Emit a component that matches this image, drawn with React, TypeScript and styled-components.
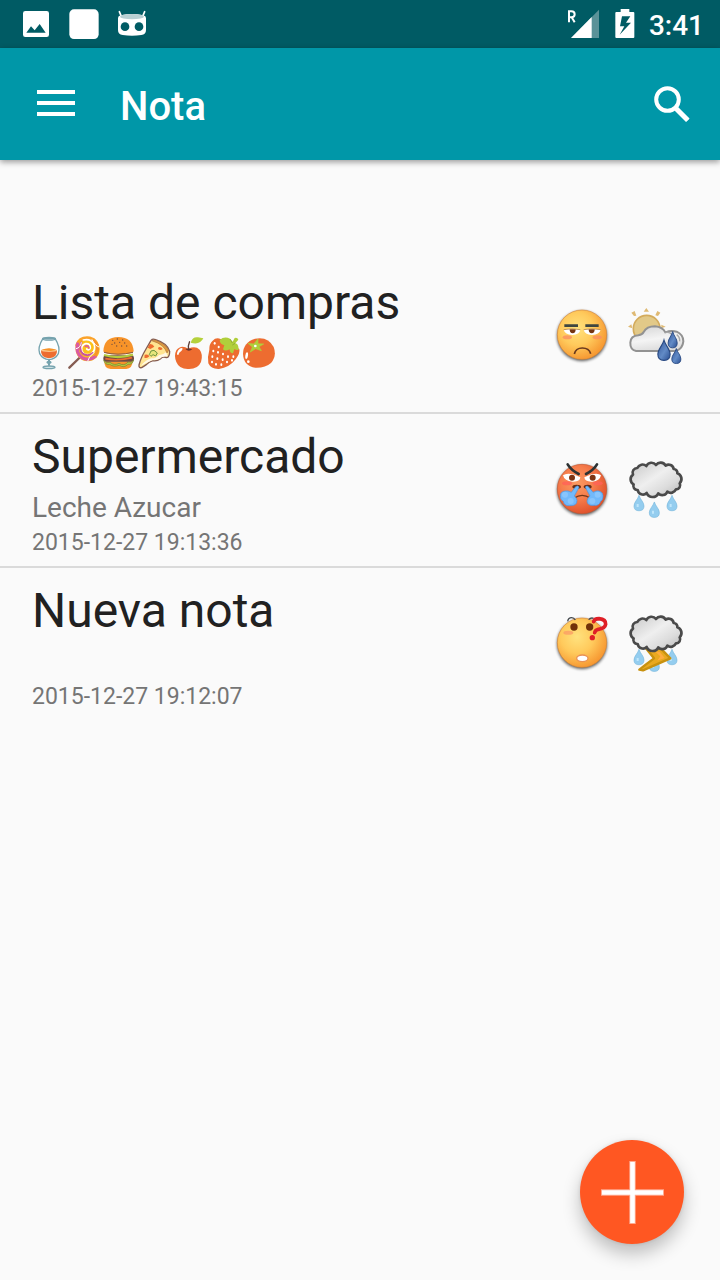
import React from "react";
import styled, { createGlobalStyle } from "styled-components";

const GlobalStyle = createGlobalStyle`
  *, *::before, *::after { box-sizing: border-box; }
  html, body, #root { height: 100%; }
  body {
    margin: 0;
    background: #fafafa;
    font-family: Roboto, "Noto Sans", sans-serif;
  }
`;

const Screen = styled.div`
  min-height: 100%;
  background: #fafafa;
`;

const StatusBar = styled.div`
  display: flex;
  align-items: center;
  justify-content: space-between;
  height: 48px;
  padding: 0 16px 0 20px;
  background: #005b64;
  color: #fff;
`;

const StatusGroup = styled.div<{ $gap: number }>`
  display: flex;
  align-items: center;
  gap: ${(p) => p.$gap}px;
`;

const Clock = styled.time`
  font-size: 28px;
  font-weight: 500;
  line-height: 48px;
  padding-top: 4px;
`;

const AppBar = styled.header`
  display: flex;
  align-items: center;
  height: 112px;
  padding: 0 16px;
  background: #0097a8;
  color: #fff;
  box-shadow: 0 2px 6px rgba(0, 0, 0, 0.4);
`;

const IconButton = styled.button`
  display: flex;
  align-items: center;
  justify-content: center;
  width: 80px;
  height: 80px;
  padding: 0 0 2px;
  border: 0;
  background: none;
  color: inherit;
  cursor: pointer;
`;

const SearchButton = styled(IconButton)`
  width: 64px;
  padding: 0;
`;

const AppTitle = styled.h1`
  flex: 1;
  margin: 0;
  padding: 6px 0 0 24px;
  font-size: 40px;
  font-weight: 500;
  line-height: 48px;
`;

const NoteList = styled.ul`
  margin: 0;
  padding: 100px 0 0;
  list-style: none;
`;

const NoteRow = styled.li`
  display: flex;
  align-items: center;
  justify-content: space-between;
  padding: 0 36px 0 32px;

  & + & {
    border-top: 2px solid #dadada;
  }
`;

const NoteText = styled.div`
  padding: 14px 0 8px;
`;

const NoteTitle = styled.h2`
  margin: 0;
  color: #212121;
  font-size: 48px;
  font-weight: 400;
  line-height: 58px;
`;

const NoteBody = styled.p`
  display: flex;
  margin: 0;
  height: 42px;
  color: #757575;
  font-size: 28px;
  line-height: 44px;
`;

const NoteDate = styled.time`
  display: block;
  color: #757575;
  font-size: 23px;
  line-height: 30px;
`;

const NoteIcons = styled.div`
  display: flex;
  gap: 18px;
`;

const Picture = styled.svg`
  display: block;
  flex: none;
  width: 56px;
  height: 56px;
  overflow: visible;
`;

const FoodIcon = styled.svg`
  display: block;
  flex: none;
  align-self: center;
  width: 35px;
  height: 36px;
  overflow: visible;
`;

const AddButton = styled.button`
  position: fixed;
  right: 36px;
  bottom: 36px;
  display: flex;
  align-items: center;
  justify-content: center;
  width: 104px;
  height: 104px;
  padding: 0;
  border: 0;
  border-radius: 50%;
  background: #ff5722;
  box-shadow: 0 10px 18px rgba(0, 0, 0, 0.24), 0 0 4px rgba(0, 0, 0, 0.1);
  cursor: pointer;
`;

/* ---------- status bar icons ---------- */

const ImageIcon = () => (
  <svg width="32" height="32" viewBox="0 0 96 96" aria-hidden="true">
    <path
      fillRule="evenodd"
      fill="#fff"
      d="M16 9h64q7 0 7 7v64q0 7-7 7H16q-7 0-7-7V16q0-7 7-7zM19 74h58L59 48 44 67 33 55z"
    />
  </svg>
);

const SquareIcon = () => (
  <svg width="32" height="32" viewBox="0 0 96 96" aria-hidden="true">
    <rect x="4" y="4" width="88" height="89" rx="14" fill="#fff" />
  </svg>
);

const RobotIcon = () => (
  <svg width="32" height="32" viewBox="0 0 96 96" aria-hidden="true">
    <path d="M10 11l6 14M86 11l-6 14" stroke="#fff" strokeWidth="5" strokeLinecap="round" />
    <path
      fill="#fff"
      d="M6 30Q6 24 14 22Q48 14 82 22Q90 24 90 30V66Q90 80 76 81Q48 85 20 81Q6 80 6 66z"
    />
    <ellipse cx="48" cy="26" rx="36" ry="8" fill="#b9d0d4" />
    <circle cx="27" cy="56" r="13" fill="#005b64" />
    <circle cx="69" cy="56" r="13" fill="#005b64" />
  </svg>
);

const SignalIcon = () => (
  <svg width="34" height="32" viewBox="0 0 102 96" role="img" aria-label="Roaming">
    <path d="M96 5v85H12z" fill="#5a9298" />
    <path d="M74 27v63H12z" fill="#fff" />
    <path
      d="M6 43V10h7q10 0 10 9t-10 9H6M14 28l9 15"
      fill="none"
      stroke="#fff"
      strokeWidth="6"
    />
  </svg>
);

const BatteryIcon = () => (
  <svg width="20" height="32" viewBox="0 0 60 96" role="img" aria-label="Charging">
    <path
      fillRule="evenodd"
      fill="#fff"
      d="M17 3h26v9h12q3 0 3 3v72q0 3-3 3H4q-3 0-3-3V15q0-3 3-3h13zM21 25L15 55H28L14 80 48 44H33L46 25z"
    />
  </svg>
);

const MenuIcon = () => (
  <svg width="38" height="26" viewBox="0 0 38 26" aria-hidden="true">
    <path d="M0 2h38M0 13h38M0 24h38" stroke="#fff" strokeWidth="4" />
  </svg>
);

const SearchIcon = () => (
  <svg width="36" height="36" viewBox="0 0 36 36" aria-hidden="true">
    <circle cx="13.5" cy="13.5" r="11.3" fill="none" stroke="#fff" strokeWidth="4" />
    <path d="M21 21l3 1 11 11-3 3-11-11z" fill="#fff" />
    <path d="M22.5 22.5l11.5 11.5" stroke="#fff" strokeWidth="4.4" />
  </svg>
);

const PlusIcon = () => (
  <svg width="64" height="64" viewBox="0 0 64 64" aria-hidden="true">
    <path d="M32.5 1v63M1 32.5h63" stroke="#ffab91" strokeWidth="6.4" />
    <path d="M32.5 2v61M2 32.5h61" stroke="#fff" strokeWidth="4.6" />
  </svg>
);

/* ---------- food emoji ---------- */

const Wine = () => (
  <FoodIcon viewBox="36 195 105 108" role="img" aria-label="wine">
    <g stroke="#76a3ae" strokeWidth="4" fill="none">
      <path d="M69 205Q52 232 59 251Q68 268 87 269Q106 268 115 251Q122 232 105 205z" fill="#fcffff" />
      <ellipse cx="87" cy="206" rx="19" ry="4" />
      <path d="M87 269v18" strokeWidth="6" />
      <ellipse cx="87" cy="277" rx="6" ry="3" fill="#76a3ae" />
      <ellipse cx="87" cy="292" rx="18" ry="4" fill="#cde0e4" />
    </g>
    <path d="M63 240H111Q113 263 87 265Q61 263 63 240z" fill="#ed6c30" />
    <ellipse cx="87" cy="241" rx="24" ry="5" fill="#fcc58a" />
    <path d="M65 239Q87 230 109 239L92 243z" fill="#f79329" />
  </FoodIcon>
);

const Lollipop = () => (
  <FoodIcon viewBox="141 195 105 108" role="img" aria-label="lollipop">
    <path d="M148 293L184 258" stroke="#855c52" strokeWidth="7" strokeLinecap="round" />
    <circle cx="203" cy="238" r="36" fill="#fcc21b" />
    <g fill="none" strokeLinecap="round">
      <path d="M171 226Q180 201 209 205Q234 212 232 239" stroke="#fba32b" strokeWidth="11" />
      <path d="M173 222Q166 249 186 263Q207 274 226 259" stroke="#db5aa0" strokeWidth="10" />
      <path d="M222 214Q240 232 227 255" stroke="#f79329" strokeWidth="9" />
      <path d="M190 210Q212 205 222 222Q229 241 213 252Q194 259 186 243Q181 226 197 221Q212 220 211 234Q208 243 200 237" stroke="#fff" strokeWidth="5" />
      <path d="M184 218Q175 238 188 251Q204 261 218 249" stroke="#c9569b" strokeWidth="6" />
      <path d="M196 229Q204 225 207 234" stroke="#db5aa0" strokeWidth="5" />
      <path d="M169 236Q182 233 184 218M203 273Q205 260 223 247M237 231Q226 229 216 209" stroke="#fff" strokeWidth="3" />
    </g>
  </FoodIcon>
);

const Burger = () => (
  <FoodIcon viewBox="246 195 105 108" role="img" aria-label="hamburger">
    <path d="M253 274Q252 296 272 297H319Q337 296 338 274z" fill="#f79329" />
    <rect x="250" y="256" width="92" height="19" rx="9" fill="#70493f" />
    <path d="M251 271Q260 282 270 277Q283 288 297 280Q313 290 324 276Q335 280 341 270Q337 285 324 283Q312 295 298 286Q280 292 269 283Q256 286 251 271z" fill="#b5cb3e" stroke="#718535" strokeWidth="2" />
    <path d="M256 266Q295 274 336 263" stroke="#ed6c30" strokeWidth="5" fill="none" />
    <path d="M252 255Q294 268 339 254" stroke="#b5cb3e" strokeWidth="7" fill="none" />
    <path d="M250 244Q252 201 295 201Q338 201 341 244Q337 254 295 254Q254 254 250 244z" fill="#f79329" />
    <path d="M252 247Q293 258 339 247" stroke="#8a5a43" strokeWidth="3" fill="none" />
    {[[278, 211], [292, 207], [308, 210], [284, 219], [299, 217], [314, 219], [276, 223], [305, 228], [290, 228], [320, 228]].map(
      ([x, y]) => (
        <circle key={`${x}-${y}`} cx={x} cy={y} r="2" fill="#6d4c41" />
      )
    )}
  </FoodIcon>
);

const Pizza = () => (
  <FoodIcon viewBox="351 195 105 108" role="img" aria-label="pizza">
    <path
      d="M393 211Q398 205 407 209Q442 220 449 244Q449 262 440 263Q428 258 422 266Q410 275 399 272Q386 276 379 284Q370 290 365 293Q356 295 357 285Q362 264 378 237z"
      fill="#ffe491"
      stroke="#855c52"
      strokeWidth="4"
      strokeLinejoin="round"
    />
    <path d="M395 212Q433 223 441 249L446 241Q438 222 405 210z" fill="#e09a3e" stroke="#a8703f" strokeWidth="2" />
    <path d="M438 247Q428 256 417 255Q407 266 394 265Q377 270 362 288Q379 279 397 271Q418 270 425 262Q436 259 443 259z" fill="#fff8e8" />
    <path d="M389 222q10-1 14 8l-12 7-8-4zM416 231q9-1 12 6-7 6-14 0zM374 254q11-3 14 5-6 8-15 4z" fill="#ed6c30" />
    <path d="M388 254l5-11 9-2 10 8-5 9-8-4-6 5z" fill="#e6e67a" stroke="#6c9440" strokeWidth="3" />
  </FoodIcon>
);

const Apple = () => (
  <FoodIcon viewBox="456 195 105 108" role="img" aria-label="apple">
    <path d="M505 236Q483 222 469 241Q461 257 469 276Q478 298 505 297Q534 298 543 276Q550 253 539 239Q526 226 505 236z" fill="#ed6c30" />
    <path d="M496 237Q506 233 517 238Q506 247 496 237z" fill="#70342d" />
    <path d="M506 240Q503 228 509 214" stroke="#5b3c35" strokeWidth="4" fill="none" />
    <path d="M512 218Q518 199 534 202L550 205Q540 226 512 218z" fill="#b5d13b" />
    <path d="M471 250Q474 236 485 234Q491 235 484 243Q476 248 475 255Q470 256 471 250z" fill="#fff" />
  </FoodIcon>
);

const Strawberry = () => (
  <FoodIcon viewBox="561 195 105 108" role="img" aria-label="strawberry">
    <path d="M578 212Q567 222 568 239Q562 259 565 280Q573 298 597 297Q628 293 647 268Q661 249 658 237L602 207Q588 201 578 212z" fill="#ed6c30" />
    <path d="M599 210Q613 198 630 206L638 215L644 204Q653 202 655 209L646 220Q655 220 656 239Q650 242 643 237L639 250Q629 250 629 238Q615 245 609 238L613 226Q600 223 599 210z" fill="#b0cf3b" />
    <path d="M630 207l7 12M645 220l-8 5" stroke="#7f9c35" strokeWidth="2" fill="none" />
    {[[584, 220], [596, 231], [580, 243], [594, 247], [609, 252], [577, 260], [592, 266], [608, 269], [624, 260], [640, 260], [576, 276], [588, 283], [604, 284], [621, 276], [636, 271]].map(
      ([x, y]) => (
        <ellipse key={`${x}-${y}`} cx={x} cy={y} rx="3" ry="4" fill="#fff" />
      )
    )}
  </FoodIcon>
);

const Tomato = () => (
  <FoodIcon viewBox="666 195 105 108" role="img" aria-label="tomato">
    <path d="M669 252Q669 217 705 206Q744 198 761 231Q771 258 753 279Q736 294 706 293Q671 289 669 252z" fill="#ed6c30" />
    <path d="M684 220L701 222L714 207L714 221L731 222L717 230L724 242L707 236L691 246L697 231z" fill="#b0cf3b" stroke="#b0cf3b" strokeWidth="2" />
    <circle cx="706" cy="228" r="4" fill="#fff" />
    <ellipse cx="680" cy="257" rx="4" ry="10" fill="#fff" transform="rotate(8 680 257)" />
    <circle cx="685" cy="275" r="4" fill="#fff" />
  </FoodIcon>
);

/* ---------- mood faces ---------- */

const FaceDefs = ({ id, angry = false }: { id: string; angry?: boolean }) => (
  <defs>
    <radialGradient id={id} cx="0.4" cy="0.38" r="0.66">
      <stop offset="0" stopColor={angry ? "#fb9b62" : "#ffe27e"} />
      <stop offset="0.5" stopColor={angry ? "#f67d4c" : "#ffca5c"} />
      <stop offset="1" stopColor={angry ? "#df4f2a" : "#f6942e"} />
    </radialGradient>
    <filter id={`${id}-soft`} x="-20%" y="-20%" width="140%" height="140%">
      <feGaussianBlur stdDeviation="4" />
    </filter>
  </defs>
);

const FaceBase = ({ id, angry }: { id: string; angry?: boolean }) => (
  <>
    <FaceDefs id={id} angry={angry} />
    <circle cx="111" cy="121" r="75" fill="#000" opacity="0.65" filter={`url(#${id}-soft)`} />
    <circle cx="111" cy="117" r="74" fill={`url(#${id})`} stroke={angry ? "#c65a35" : "#d98a38"} strokeWidth="2" />
  </>
);

const AnnoyedFace = () => (
  <Picture viewBox="27 37 168 168" role="img" aria-label="annoyed">
    <FaceBase id="annoyed" />
    <ellipse cx="67" cy="125" rx="14" ry="6" fill="#fa8f60" opacity="0.8" />
    <ellipse cx="157" cy="125" rx="14" ry="6" fill="#fa8f60" opacity="0.8" />
    <path d="M56 102Q80 96 106 102Q104 117 82 118Q60 117 56 102zM116 102Q141 96 167 102Q163 117 141 118Q119 117 116 102z" fill="#fff" />
    <path d="M74 101h18q0 12-9 12t-9-12zM131 101h18q0 12-9 12t-9-12z" fill="#753511" />
    <path d="M56 102Q80 97 106 102M116 102Q141 97 167 102" stroke="#a56c31" strokeWidth="2" fill="none" />
    <path d="M58 90h41M121 90h40" stroke="#3f4640" strokeWidth="8" />
    <path d="M88 175Q92 157 112 157Q132 157 137 174" stroke="#69391d" strokeWidth="5" fill="none" />
  </Picture>
);

const AngryFace = () => (
  <Picture viewBox="27 36 168 168" role="img" aria-label="angry">
    <FaceBase id="angry" angry />
    <ellipse cx="66" cy="100" rx="15" ry="6" fill="#ff6257" opacity="0.8" />
    <ellipse cx="158" cy="100" rx="15" ry="6" fill="#ff6257" opacity="0.8" />
    <path d="M54 76Q64 68 84 73L106 82Q105 96 83 95Q58 94 54 76zM168 76Q160 68 140 73L118 82Q119 96 142 95Q164 94 168 76z" fill="#fff" />
    <circle cx="81" cy="83" r="9" fill="#7d3413" />
    <circle cx="143" cy="83" r="9" fill="#7d3413" />
    <path d="M68 43Q78 60 101 72M156 43Q146 60 123 72" stroke="#2d3233" strokeWidth="8" fill="none" strokeLinecap="round" />
    <path d="M88 144Q111 128 136 144" stroke="#743719" strokeWidth="4" fill="none" />
    <ellipse cx="95" cy="110" rx="13" ry="6" fill="#692c13" />
    <ellipse cx="128" cy="110" rx="12" ry="6" fill="#692c13" />
    <g fill="#72b9fb" stroke="#4a96e2" strokeWidth="2">
      <path d="M92 110L79 127Q69 121 60 123Q46 125 46 137Q45 149 55 154Q58 169 74 167Q96 169 96 151Q95 144 88 138L102 112Q99 105 92 110z" />
      <path d="M130 110L144 127Q153 121 162 123Q174 126 174 137Q175 149 167 154Q162 168 149 166Q127 169 126 153Q127 144 135 138L121 112Q124 105 130 110z" />
    </g>
    <g fill="#97cdff" opacity="0.6">
      <circle cx="60" cy="134" r="9" />
      <circle cx="77" cy="153" r="9" />
      <circle cx="158" cy="134" r="9" />
      <circle cx="142" cy="153" r="9" />
    </g>
  </Picture>
);

const ConfusedFace = () => (
  <Picture viewBox="27 37 168 168" role="img" aria-label="confused">
    <FaceBase id="confused" />
    <path d="M68 53Q70 42 80 42Q87 42 91 49M131 48Q137 41 146 44" stroke="#42474b" strokeWidth="4" fill="none" />
    <ellipse cx="70" cy="87" rx="15" ry="6" fill="#fb9765" opacity="0.7" />
    <circle cx="87" cy="70" r="11" fill="#713109" />
    <circle cx="134" cy="70" r="11" fill="#713109" />
    <ellipse cx="112" cy="164" rx="17" ry="10" fill="#fff" stroke="#e99155" strokeWidth="4" />
    <path d="M146 54Q148 45 162 45Q183 47 182 62Q180 75 160 77Q151 79 149 87" stroke="#df1f27" strokeWidth="11" fill="none" strokeLinecap="round" />
    <circle cx="142" cy="102" r="8" fill="#df1f27" />
  </Picture>
);

/* ---------- weather ---------- */

const DROP = "M0-26C4-12 16-4 16 9Q16 24 0 24T-16 9C-16-4-4-12 0-26z";

const SunCloudRain = () => (
  <Picture viewBox="249 39 168 168" role="img" aria-label="sun, cloud and rain">
    <defs>
      <linearGradient id="cloud" x1="0" y1="0" x2="0.3" y2="1">
        <stop offset="0" stopColor="#d4d4d4" />
        <stop offset="0.6" stopColor="#f4f4f4" />
        <stop offset="1" stopColor="#dedede" />
      </linearGradient>
      <linearGradient id="rain" x1="0" y1="0" x2="1" y2="1">
        <stop offset="0" stopColor="#325498" />
        <stop offset="0.55" stopColor="#628bc6" />
        <stop offset="1" stopColor="#2a4e91" />
      </linearGradient>
    </defs>
    <circle cx="305" cy="101" r="40" fill="#e2c988" stroke="#d3ab5c" strokeWidth="5" />
    <g fill="#dfba74">
      <path d="M296 50l8-11 8 11zM259 53l10-5 5 14-7 1zM337 48l9 5-7 10-8-2zM249 95l10-7 3 12zM349 89l13 6-13 5z" />
    </g>
    <path
      d="M273 168Q255 164 256 143Q257 122 280 121Q292 119 296 111Q305 94 330 94Q353 96 361 112Q378 105 395 110Q415 119 415 139Q413 161 393 168z"
      fill="url(#cloud)"
      stroke="#929292"
      strokeWidth="6"
    />
    <path d="M361 112Q373 109 382 120M395 119Q405 126 404 139" stroke="#a8a8a8" strokeWidth="4" fill="none" />
    <g fill="url(#rain)" stroke="#284982" strokeWidth="3">
      <path d={DROP} transform="translate(383 135) scale(.85 .98)" />
      <path d={DROP} transform="translate(357 167) scale(1.15 1.22)" />
      <path d={DROP} transform="translate(394 184) scale(.85 .9)" />
    </g>
  </Picture>
);

const StormCloud = ({ id }: { id: string }) => (
  <>
    <defs>
      <linearGradient id={id} x1="0" y1="0" x2="1" y2="1">
        <stop offset="0" stopColor="#c6c6c6" />
        <stop offset="0.45" stopColor="#efefef" />
        <stop offset="0.7" stopColor="#dcdcdc" />
        <stop offset="1" stopColor="#b4b4b4" />
      </linearGradient>
    </defs>
    <path
      d="M264 74A14 14 0 0 1 277 54A17 17 0 0 1 304 48A17 17 0 0 1 333 45A17 17 0 0 1 362 47A15 15 0 0 1 386 57A11 11 0 0 1 397 70A18 18 0 0 1 404 100A12 12 0 0 1 393 118A17 17 0 0 1 367 125A16 16 0 0 1 340 130A19 19 0 0 1 305 129A16 16 0 0 1 278 120A12 12 0 0 1 266 103A17 17 0 0 1 264 74z"
      fill={`url(#${id})`}
      stroke="#4a4a4a"
      strokeWidth="8"
      strokeLinejoin="round"
    />
  </>
);

const RainDrops = () => (
  <g fill="#94cdef" stroke="#73b5dc" strokeWidth="2">
    <path d={DROP} transform="translate(282 160) scale(.94 .93)" />
    <path d={DROP} transform="translate(328 180) scale(.94 .93)" />
    <path d={DROP} transform="translate(381 160) scale(.94 .93)" />
    <path d="M278 162v9M324 182v9M377 162v9" stroke="#bfe6fb" strokeWidth="6" />
  </g>
);

const RainCloud = () => (
  <Picture viewBox="249 36 168 168" role="img" aria-label="rain">
    <RainDrops />
    <StormCloud id="rain-cloud" />
  </Picture>
);

const ThunderCloud = () => (
  <Picture viewBox="249 36 168 168" role="img" aria-label="thunderstorm">
    <RainDrops />
    <path
      d="M304 134L327 163L302 182L283 197L294 199L376 163L347 133z"
      fill="#e9a920"
      stroke="#c8910f"
      strokeWidth="7"
      strokeLinejoin="round"
    />
    <path d="M331 143l15 14-9 13 22-8-15-19z" fill="#ffac3e" />
    <StormCloud id="thunder-cloud" />
  </Picture>
);

/* ---------- notes ---------- */

interface Note {
  title: string;
  body: React.ReactNode;
  date: string;
  mood: React.ReactNode;
  weather: React.ReactNode;
}

const notes: Note[] = [
  {
    title: "Lista de compras",
    body: (
      <>
        <Wine />
        <Lollipop />
        <Burger />
        <Pizza />
        <Apple />
        <Strawberry />
        <Tomato />
      </>
    ),
    date: "2015-12-27 19:43:15",
    mood: <AnnoyedFace />,
    weather: <SunCloudRain />,
  },
  {
    title: "Supermercado",
    body: "Leche Azucar",
    date: "2015-12-27 19:13:36",
    mood: <AngryFace />,
    weather: <RainCloud />,
  },
  {
    title: "Nueva nota",
    body: null,
    date: "2015-12-27 19:12:07",
    mood: <ConfusedFace />,
    weather: <ThunderCloud />,
  },
];

export default function App() {
  return (
    <Screen>
      <GlobalStyle />
      <StatusBar>
        <StatusGroup $gap={16}>
          <ImageIcon />
          <SquareIcon />
          <RobotIcon />
        </StatusGroup>
        <StatusGroup $gap={14}>
          <SignalIcon />
          <BatteryIcon />
          <Clock>3:41</Clock>
        </StatusGroup>
      </StatusBar>
      <AppBar>
        <IconButton type="button" aria-label="Menu">
          <MenuIcon />
        </IconButton>
        <AppTitle>Nota</AppTitle>
        <SearchButton type="button" aria-label="Search">
          <SearchIcon />
        </SearchButton>
      </AppBar>
      <main>
        <NoteList>
          {notes.map((note) => (
            <NoteRow key={note.date}>
              <NoteText>
                <NoteTitle>{note.title}</NoteTitle>
                <NoteBody>{note.body}</NoteBody>
                <NoteDate>{note.date}</NoteDate>
              </NoteText>
              <NoteIcons>
                {note.mood}
                {note.weather}
              </NoteIcons>
            </NoteRow>
          ))}
        </NoteList>
      </main>
      <AddButton type="button" aria-label="Add note">
        <PlusIcon />
      </AddButton>
    </Screen>
  );
}
